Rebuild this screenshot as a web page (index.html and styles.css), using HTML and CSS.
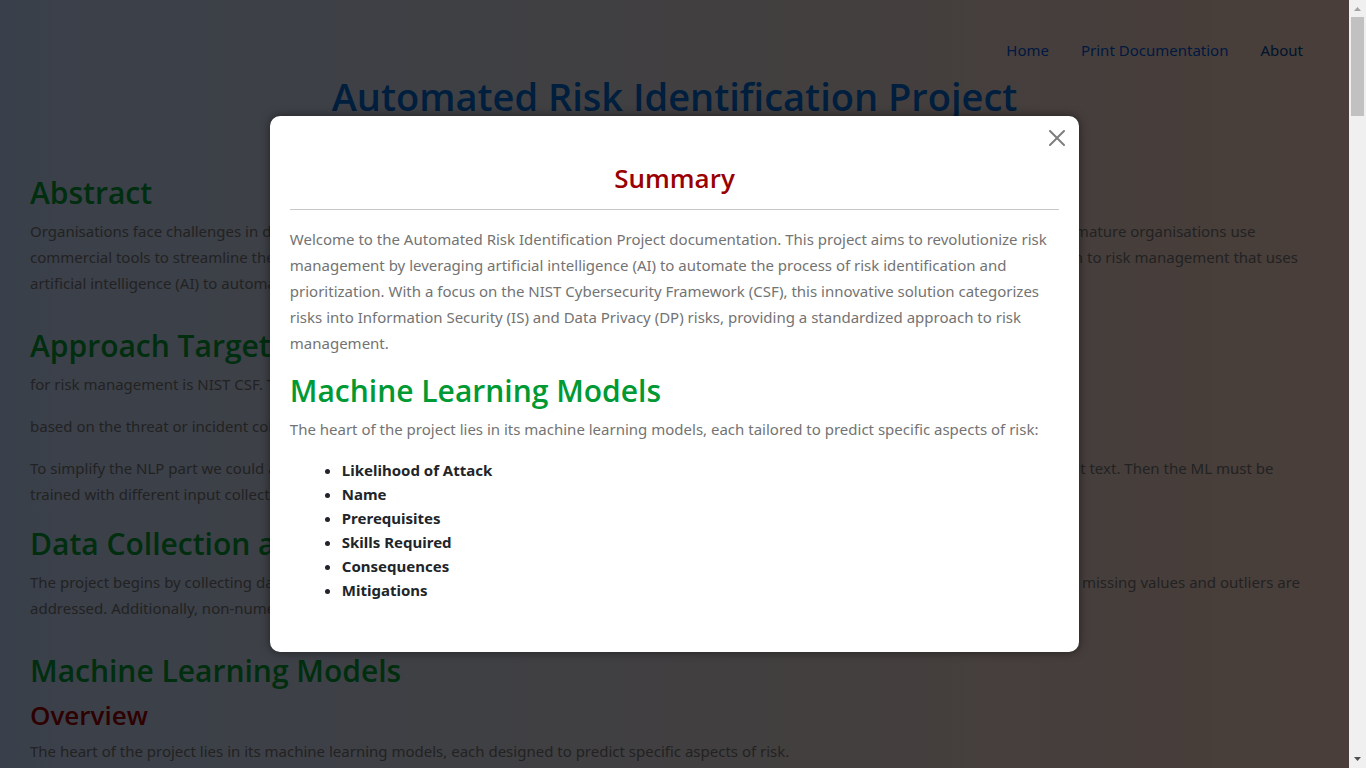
FILE: index.html
```html
<!DOCTYPE html>
<html lang="en">
<head>
<meta charset="utf-8">
<meta name="viewport" content="width=device-width, initial-scale=1">
<title>Automated Risk Identification Project</title>
<link rel="stylesheet" href="styles.css">
</head>
<body>
<div class="page">
  <nav class="nav" aria-label="Main">
    <a class="nav-link" href="#home">Home</a>
    <a class="nav-link" href="#print">Print Documentation</a>
    <a class="nav-link nav-link-about" href="#about">About</a>
  </nav>
  <h1 class="page-title">Automated Risk Identification Project</h1>
  <main class="content">
    <section class="section section-spaced">
      <h2 class="heading">Abstract</h2>
      <p class="text">Organisations face challenges in dealing with the identification and the prioritisation of risks across all their systems and their records. Several more mature organisations use<br>commercial tools to streamline the process, although these tools often need a lot of manual work at every stage. This project sets out a new approach to risk management that uses<br>artificial intelligence (AI) to automate the process of risk identification.</p>
    </section>
    <section class="section">
      <h2 class="heading">Approach Target Framework</h2>
      <p class="text">for risk management is NIST CSF. The framework sorts the risks</p>
      <p class="text">based on the threat or incident collected from the sources.</p>
      <p class="text">To simplify the NLP part we could apply a fixed set of keywords for each of the categories and match them with the words that were found in the input text. Then the ML must be<br>trained with different input collections.</p>
    </section>
    <section class="section section-spaced">
      <h2 class="heading">Data Collection and Preprocessing</h2>
      <p class="text">The project begins by collecting data from a number of public sources on attack patterns and finally preparing it for training. To increase data quality, missing values and outliers are<br>addressed. Additionally, non-numeric values are encoded.</p>
    </section>
    <section class="section">
      <h2 class="heading">Machine Learning Models</h2>
      <h3 class="subheading">Overview</h3>
      <p class="text">The heart of the project lies in its machine learning models, each designed to predict specific aspects of risk.</p>
    </section>
  </main>
  <div class="overlay">
    <div class="dialog" role="dialog" aria-modal="true" aria-labelledby="summary-title">
      <button class="close" type="button" aria-label="Close">
        <svg class="close-icon" viewBox="0 0 16 16" aria-hidden="true"><path d="M.293.293a1 1 0 0 1 1.414 0L8 6.586 14.293.293a1 1 0 1 1 1.414 1.414L9.414 8l6.293 6.293a1 1 0 0 1-1.414 1.414L8 9.414l-6.293 6.293a1 1 0 0 1-1.414-1.414L6.586 8 .293 1.707a1 1 0 0 1 0-1.414z"/></svg>
      </button>
      <h3 class="subheading dialog-title" id="summary-title">Summary</h3>
      <hr class="rule">
      <p class="text">Welcome to the Automated Risk Identification Project documentation. This project aims to revolutionize risk management by leveraging artificial intelligence (AI) to automate the process of risk identification and prioritization. With a focus on the NIST Cybersecurity Framework (CSF), this innovative solution categorizes risks into Information Security (IS) and Data Privacy (DP) risks, providing a standardized approach to risk management.</p>
      <h2 class="heading">Machine Learning Models</h2>
      <p class="text">The heart of the project lies in its machine learning models, each tailored to predict specific aspects of risk:</p>
      <ul class="models">
        <li>Likelihood of Attack</li>
        <li>Name</li>
        <li>Prerequisites</li>
        <li>Skills Required</li>
        <li>Consequences</li>
        <li>Mitigations</li>
      </ul>
    </div>
  </div>
</div>
<div class="scrollbar" aria-hidden="true">
  <svg class="arrow" viewBox="0 0 17 17"><path d="M5 11h7L8.500 7z" fill="#a3a3a3"/></svg>
  <div class="track"><div class="thumb"></div></div>
  <svg class="arrow" viewBox="0 0 17 17"><path d="M5 6h7L8.500 10z" fill="#505050"/></svg>
</div>
</body>
</html>
```
FILE: styles.css
```css
* { box-sizing: border-box; }

body {
  display: grid;
  grid-template-columns: minmax(0, 1fr) 17px;
  height: 100vh;
  margin: 0;
  overflow: hidden;
  font-family: "Noto Sans", "Open Sans", sans-serif;
  font-size: 15px;
  line-height: 24px;
  color: #212529;
}

.page {
  position: relative;
  min-height: 0;
  overflow: hidden;
  background: linear-gradient(to right, #c3d8fa, #dad4d8 50%, #f5cfbe);
}

.nav {
  display: flex;
  justify-content: flex-end;
  gap: 32px;
  padding: 38px 46px 10px;
}
.nav-link { color: #0056d6; text-decoration: none; }
.nav-link-about { color: #004494; }

.page-title,
.heading,
.subheading {
  font-family: "Open Sans", "Noto Sans", sans-serif;
  font-weight: 600;
}
.page-title {
  margin: 0;
  font-size: 38px;
  line-height: 48px;
  text-align: center;
  color: #0066cc;
}

.content { padding: 54px 30px 0; }
.section { margin-bottom: 18px; }
.section-spaced { margin-bottom: 31px; }

.heading {
  margin: 0 0 6px;
  font-size: 30px;
  line-height: 38px;
  color: #009933;
}
.subheading {
  margin: 8px 0 6px;
  font-size: 26px;
  line-height: 34px;
  color: #990000;
}
.text {
  margin: 0 0 16px;
  line-height: 26px;
  color: #737373;
}

.overlay {
  position: absolute;
  inset: 0;
  display: flex;
  align-items: center;
  justify-content: center;
  background: rgba(0, 0, 0, 0.7);
}
.dialog {
  position: relative;
  width: 60%;
  padding: 45px 20px 50px;
  border-radius: 10px;
  background: #fff;
  box-shadow: 0 0 10px rgba(0, 0, 0, 0.5);
}
.close {
  position: absolute;
  top: 10px;
  right: 10px;
  display: flex;
  padding: 4px;
  border: 0;
  background: none;
  opacity: 0.5;
}
.close-icon { width: 16px; height: 16px; }
.dialog-title { margin: 0 0 14px; text-align: center; }
.rule {
  margin: 0 0 16px;
  border: 0;
  border-top: 1px solid #c7c8c9;
}
.models {
  margin: 0;
  padding-left: 52px;
  font-weight: 700;
}

.scrollbar {
  display: flex;
  flex-direction: column;
  background: #f0f0f0;
}
.arrow { width: 17px; height: 17px; }
.track { flex: 1; padding: 0 2px; }
.thumb { height: 99px; background: #c1c1c1; }
```
